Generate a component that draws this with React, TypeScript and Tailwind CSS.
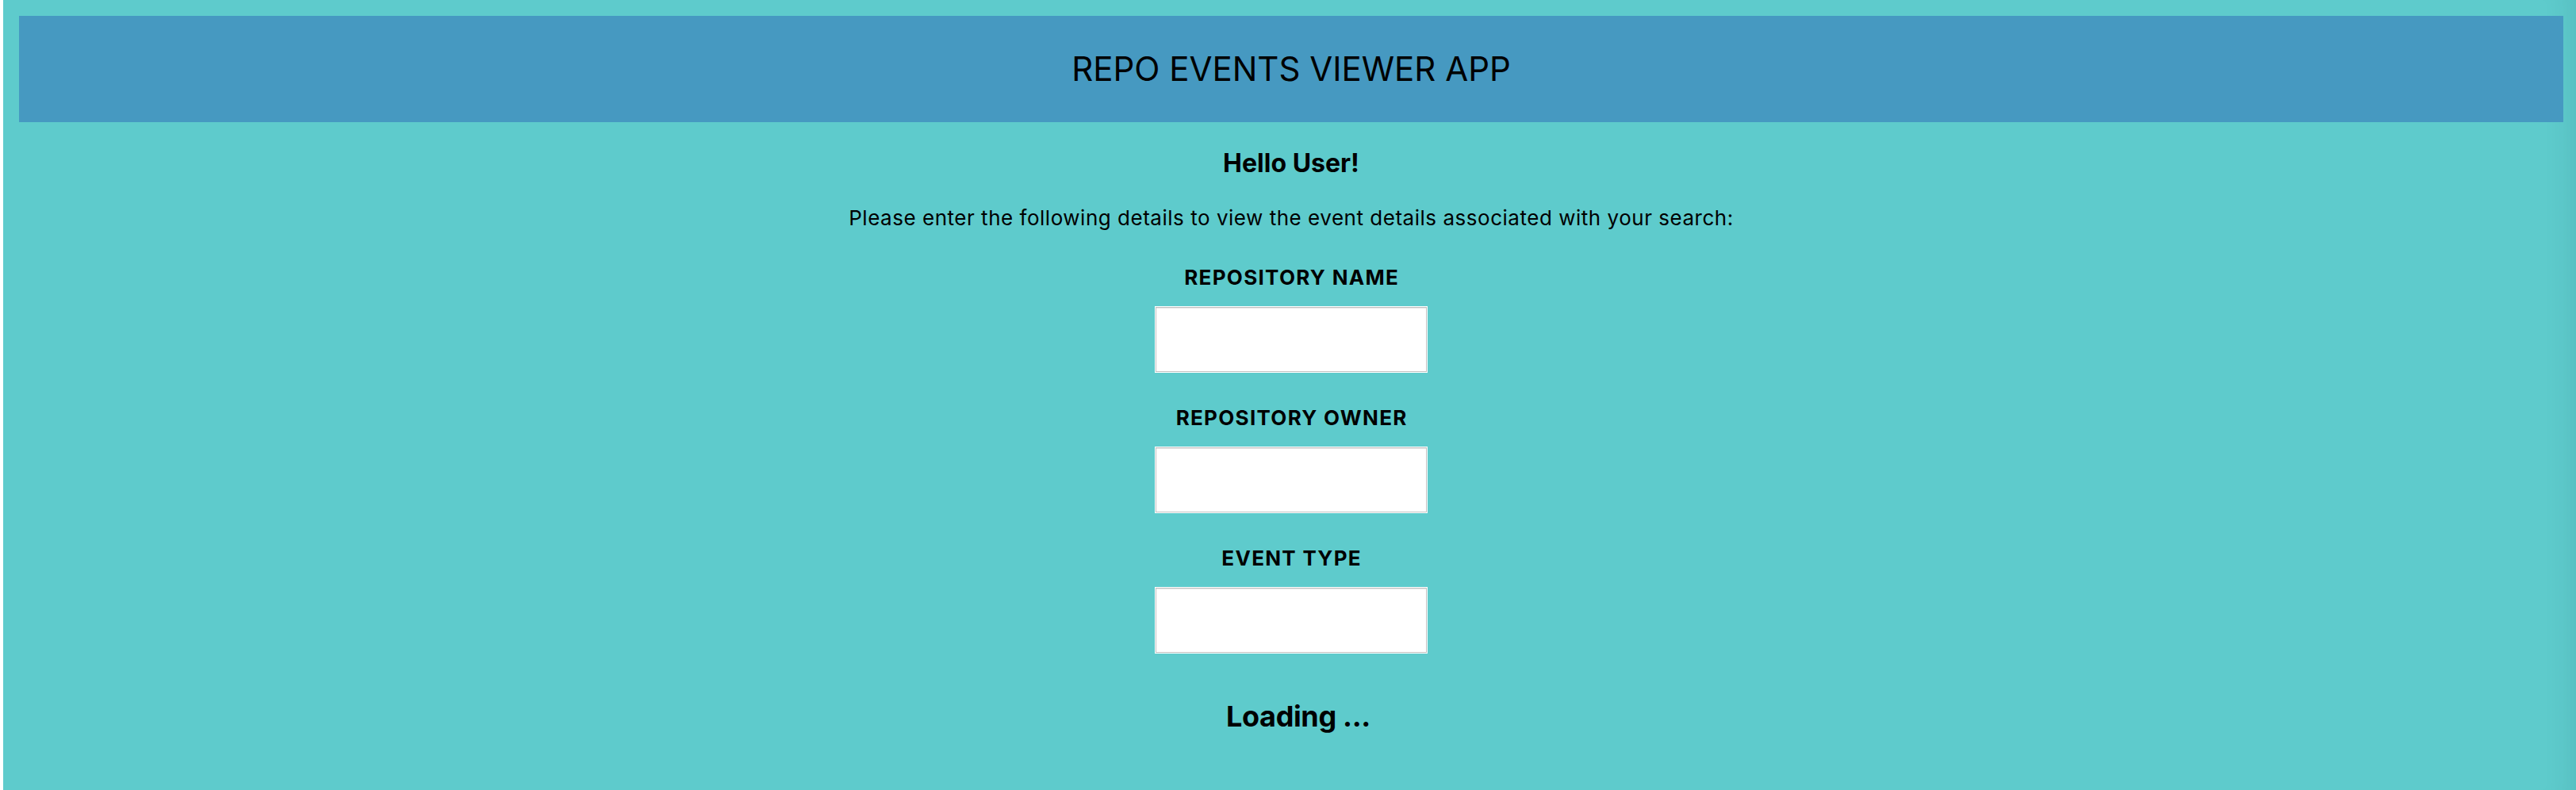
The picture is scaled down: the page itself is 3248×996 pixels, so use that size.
import { useState } from 'react';

const fields = [
    { id: 'repoName', label: 'REPOSITORY NAME' },
    { id: 'repoOwner', label: 'REPOSITORY OWNER' },
    { id: 'eventType', label: 'EVENT TYPE' },
];

export default function App() {
    const [values, setValues] = useState<Record<string, string>>({});

    return (
        <div className="min-h-[996px] bg-white pl-[4px] font-['Inter',sans-serif] text-black">
            <div className="min-h-[996px] bg-[#5ecbcc] pl-[20px] pr-[16px] pt-[20px] pb-[40px] shadow-[inset_-40px_0_40px_-40px_rgba(0,40,60,0.12)]">
                <header className="flex h-[134px] items-center justify-center bg-[#4699c1]">
                    <h1 className="text-[42px] leading-none font-normal">REPO EVENTS VIEWER APP</h1>
                </header>

                <main className="flex flex-col items-center">
                    <h3 className="mt-[36px] text-[32px] leading-[32px] font-bold">Hello User!</h3>
                    <p className="mt-[40px] text-[26px] leading-[26px] tracking-[0.02em]">
                        Please enter the following details to view the event details associated with your search:
                    </p>

                    <form className="mt-[49px] flex flex-col items-center gap-[45px]" onSubmit={(e) => e.preventDefault()}>
                        {fields.map((f) => (
                            <div key={f.id} className="flex flex-col items-center">
                                <label htmlFor={f.id} className="pl-[0.05em] text-[26px] leading-[26px] font-bold tracking-[0.05em]">
                                    {f.label}
                                </label>
                                <input
                                    id={f.id}
                                    type="text"
                                    value={values[f.id] ?? ''}
                                    onChange={(e) => setValues({ ...values, [f.id]: e.target.value })}
                                    className="mt-[24px] h-[82px] w-[342px] border border-[#c2c2c2] bg-white px-2 text-[24px] outline outline-1 outline-white shadow-[inset_0_1px_0_#e6e6e6]"
                                />
                            </div>
                        ))}
                    </form>

                    <h2 className="mt-[62px] pl-[18px] text-[36px] leading-[37px] font-bold tracking-[-0.01em]">Loading ...</h2>
                </main>
            </div>
        </div>
    );
}
